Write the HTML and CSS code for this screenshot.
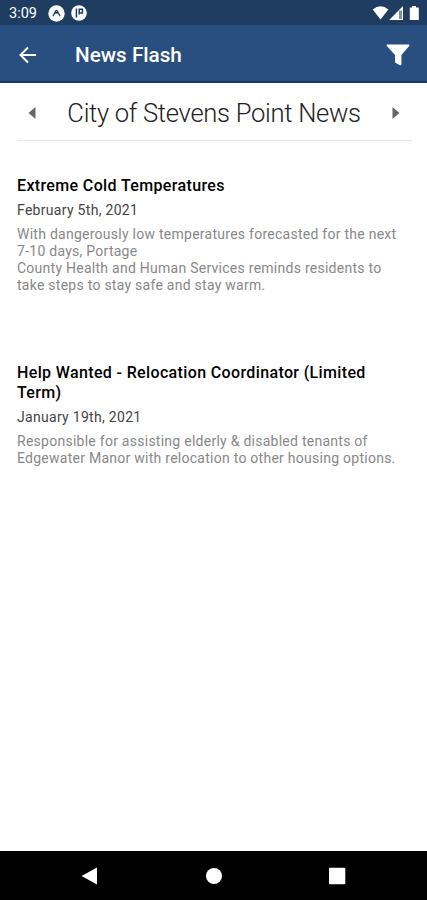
FILE: index.html
```html
<!DOCTYPE html>
<html lang="en">
<head>
    <meta charset="UTF-8">
    <title>News Flash</title>
    <link rel="stylesheet" href="styles.css">
</head>
<body>
    <div class="status-bar">
        <span class="time">3:09</span>
        <svg class="notice" viewBox="0 0 17 17">
            <circle cx="8.5" cy="8.5" r="8.2" fill="#fff"/>
            <path d="M5 11.2 7.6 6Q8.5 4.6 9.4 6L12 11.2M7.4 8.6 8.5 7.4 9.6 8.6" fill="none" stroke="#1f3d61" stroke-width="1.3"/>
        </svg>
        <svg class="notice notice-small" viewBox="0 0 16 16">
            <circle cx="8" cy="8" r="7.8" fill="#fff"/>
            <path d="M5.4 3.6V12.4M8.2 3.5V9.4M8 4.3H11.4V7.9H8" fill="none" stroke="#1f3d61" stroke-width="1.5"/>
        </svg>
        <svg class="signals" viewBox="0 0 50 16">
            <path d="M.7 4.5Q8.5-1.8 16.4 4.5L8.5 14.5Z" fill="#fff"/>
            <path d="M31 1V15H17.2Z" fill="#fff"/>
            <path d="M27 5.5H30V14H27Z" fill="#8192a8"/>
            <path d="M40 1H44V2.5H46.8V15H37.8V2.5H40Z" fill="#fff"/>
        </svg>
    </div>

    <header class="app-bar">
        <svg class="back" viewBox="0 0 18 18">
            <path d="M17 9H2M9 1.5 1.5 9 9 16.5" fill="none" stroke="#fff" stroke-width="2"/>
        </svg>
        <h1>News Flash</h1>
        <svg class="filter" viewBox="0 0 24 22">
            <path d="M1.2.5H22.8Q24 .8 23.2 2L15.4 11V20.5Q14.8 21.6 13.5 21L9 18.5V11L.8 2Q0 .8 1.2.5Z" fill="#fff"/>
        </svg>
    </header>

    <main>
        <div class="category">
            <svg class="arrow" viewBox="0 0 8 14"><path d="M7.5 1V13L.5 7Z" fill="#666"/></svg>
            <h2>City of Stevens Point News</h2>
            <svg class="arrow" viewBox="0 0 8 14"><path d="M.5 1V13L7.5 7Z" fill="#666"/></svg>
        </div>

        <article class="news-item">
            <h3>Extreme Cold Temperatures</h3>
            <p class="date">February 5th, 2021</p>
            <p class="summary">With dangerously low temperatures forecasted for the next<br>7-10 days, Portage<br>County Health and Human Services reminds residents to<br>take steps to stay safe and stay warm.</p>
        </article>

        <article class="news-item">
            <h3>Help Wanted - Relocation Coordinator (Limited<br>Term)</h3>
            <p class="date">January 19th, 2021</p>
            <p class="summary">Responsible for assisting elderly &amp; disabled tenants of<br>Edgewater Manor with relocation to other housing options.</p>
        </article>
    </main>

    <nav class="nav-bar">
        <svg viewBox="0 0 18 18"><path d="M16 .5V17.5L.5 9Z" fill="#fff"/></svg>
        <svg viewBox="0 0 18 18"><circle cx="9" cy="9" r="8" fill="#fff"/></svg>
        <svg viewBox="0 0 18 18"><rect x="1" y=".7" width="16.3" height="16.6" rx="1" fill="#fff"/></svg>
    </nav>
</body>
</html>
```
FILE: styles.css
```css
* {
    box-sizing: border-box;
}
body {
    margin: 0;
    height: 900px;
    display: flex;
    flex-direction: column;
    overflow: hidden;
    font-family: Roboto, sans-serif;
    background: #fff;
    color: #000;
}
h1, h2, h3, p {
    margin: 0;
    white-space: nowrap;
}
svg {
    display: block;
    flex: none;
}
.status-bar {
    height: 25px;
    display: flex;
    align-items: center;
    padding: 1px 5px 0 9px;
    background: #1f3d61;
    color: #fff;
}
.time {
    width: 39px;
    font-size: 14.5px;
}
.notice {
    width: 17px;
    height: 17px;
}
.notice-small {
    width: 16px;
    height: 16px;
    margin-left: 6px;
}
.signals {
    width: 50px;
    height: 16px;
    margin-left: auto;
}
.app-bar {
    height: 58px;
    display: flex;
    align-items: center;
    padding: 3px 17px 0 19px;
    background: #284f80;
    border-bottom: 2px solid #17396b;
    color: #fff;
}
.back {
    width: 18px;
    height: 18px;
    margin-right: 38px;
}
h1 {
    font-size: 20.7px;
    font-weight: 500;
}
.filter {
    width: 24px;
    height: 22px;
    margin-left: auto;
}
main {
    flex: 1;
    padding: 0 15px 0 17px;
}
.category {
    height: 58px;
    display: flex;
    align-items: center;
    justify-content: space-between;
    padding: 2px 12px 0 11px;
    border-bottom: 1px solid #e6e6e6;
}
.arrow {
    width: 8px;
    height: 14px;
}
h2 {
    font-size: 25.6px;
    line-height: 32px;
    font-weight: 300;
    letter-spacing: -0.3px;
    color: #222;
}
.news-item {
    height: 187px;
    padding-top: 35px;
}
h3 {
    font-size: 16px;
    line-height: 20px;
    font-weight: 500;
    letter-spacing: 0.36px;
}
.date {
    margin-top: 6px;
    font-size: 14px;
    line-height: 17px;
    letter-spacing: 0.3px;
    color: #444;
}
.summary {
    margin-top: 7px;
    font-size: 14px;
    line-height: 17px;
    letter-spacing: 0.26px;
    color: #888;
}
.nav-bar {
    height: 49px;
    display: flex;
    align-items: center;
    justify-content: space-between;
    padding: 0 81px;
    background: #000;
}
.nav-bar svg {
    width: 18px;
    height: 18px;
}
```
